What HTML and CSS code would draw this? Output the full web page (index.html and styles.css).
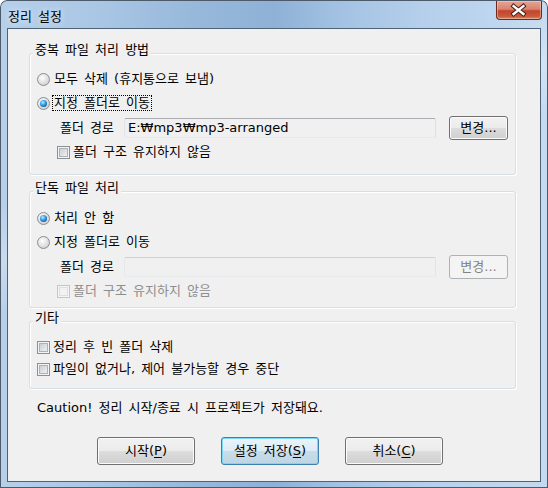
FILE: index.html
```html
<!doctype html>
<html lang="ko">
<head>
    <meta charset="UTF-8">
    <title>정리 설정</title>
    <link rel="stylesheet" href="styles.css">
</head>
<body>
    <div class="window">
        <div class="titlebar">
            <span class="title">정리 설정</span>
            <div class="closeBtn">
                <svg width="46" height="19" viewBox="0 0 46 19">
                    <path d="M18 5 L28 13 M28 5 L18 13" stroke="#4a2018" stroke-width="4.5" stroke-linecap="square"/>
                    <path d="M18 5 L28 13 M28 5 L18 13" stroke="#ffffff" stroke-width="2.5" stroke-linecap="square"/>
                </svg>
            </div>
        </div>

        <div class="client">
            <div class="group groupDup">
                <div class="groupTitle">중복 파일 처리 방법</div>
                <div class="row"><span class="radio"></span>모두 삭제 (휴지통으로 보냄)</div>
                <div class="row"><span class="radio checked"></span><span class="focused">지정 폴더로 이동</span></div>
                <div class="row pathRow">
                    <span class="pathLabel">폴더 경로</span>
                    <div class="textbox">E:₩mp3₩mp3-arranged</div>
                    <div class="btn smallBtn">변경...</div>
                </div>
                <div class="row indent"><span class="checkbox"></span>폴더 구조 유지하지 않음</div>
            </div>

            <div class="group groupSingle">
                <div class="groupTitle">단독 파일 처리</div>
                <div class="row"><span class="radio checked"></span>처리 안 함</div>
                <div class="row"><span class="radio"></span>지정 폴더로 이동</div>
                <div class="row pathRow">
                    <span class="pathLabel">폴더 경로</span>
                    <div class="textbox disabled"></div>
                    <div class="btn smallBtn disabled">변경...</div>
                </div>
                <div class="row indent grayText"><span class="checkbox disabled"></span>폴더 구조 유지하지 않음</div>
            </div>

            <div class="group groupEtc">
                <div class="groupTitle">기타</div>
                <div class="row short"><span class="checkbox"></span>정리 후 빈 폴더 삭제</div>
                <div class="row short"><span class="checkbox"></span>파일이 없거나, 제어 불가능할 경우 중단</div>
            </div>

            <p class="caution">Caution! 정리 시작/종료 시 프로젝트가 저장돼요.</p>

            <div class="buttons">
                <div class="btn">시작(<u>P</u>)</div>
                <div class="btn default">설정 저장(<u>S</u>)</div>
                <div class="btn">취소(<u>C</u>)</div>
            </div>
        </div>
    </div>
</body>
</html>
```

FILE: styles.css
```css
body {
    margin: 0;
    background-color: #ffffff;
    font-family: "DejaVu Sans", "Noto Sans CJK KR", sans-serif;
    font-size: 13px;
    line-height: 14px;
    word-spacing: 2px;
    color: #000000;
}

.window {
    width: 548px;
    height: 488px;
    box-sizing: border-box;
    padding: 0 7px 6px 7px;
    display: flex;
    flex-direction: column;
    border-radius: 7px 7px 0 0;
    box-shadow: inset 0 0 0 1px #4c5a69;
    background:
        linear-gradient(160deg, rgba(255,255,255,0) 30%, rgba(255,255,255,0.25) 38%, rgba(255,255,255,0) 46%),
        linear-gradient(to right, #b7d0ea 0%, #a9c6e5 18%, #97b8da 36%, #8eb1d6 50%, #a3c2e3 62%, #b6d0ec 78%, #c4daf0 100%);
}

/* title bar */

.titlebar {
    height: 28px;
    display: flex;
    align-items: flex-start;
}

.title {
    margin: 10px 0 0 1px;
    text-shadow: 0 0 6px rgba(255,255,255,0.9);
}

.closeBtn {
    margin: 1px -1px 0 auto;
    width: 46px;
    height: 19px;
    box-sizing: border-box;
    border: 1px solid #6b2a20;
    border-top: none;
    border-radius: 0 0 4px 4px;
    background: linear-gradient(#e8a492 0%, #d98470 45%, #c4442a 55%, #c95a3c 85%, #d78a6a 100%);
    box-shadow: inset 0 0 0 1px rgba(255,220,200,0.45);
    display: flex;
}

.closeBtn svg {
    margin-left: -1px;
}

/* client area */

.client {
    flex: 1;
    border: 1px solid #4f6378;
    background-color: #f0f0f0;
    padding: 24px 0 0 21px;
}

.group {
    width: 487px;
    box-sizing: border-box;
    border: 1px solid #d5dfe5;
    border-radius: 3px;
    box-shadow: inset 1px 1px 0 #ffffff, 1px 1px 0 #ffffff;
    padding: 0 7px;
}

.groupTitle {
    display: table;
    margin: -11px 0 0 -4px;
    padding: 0 2px;
    background-color: #f0f0f0;
}

.groupDup {
    padding-bottom: 10px;
}

.groupDup .groupTitle {
    margin-bottom: 10px;
}

.groupSingle {
    margin-top: 16px;
    padding-bottom: 4px;
}

.groupSingle .groupTitle,
.groupEtc .groupTitle {
    margin-bottom: 11px;
}

.groupEtc {
    margin-top: 13px;
    padding-bottom: 8px;
}

.row {
    height: 24px;
    display: flex;
    align-items: center;
}

.row.short {
    height: 22px;
}

.pathRow {
    height: 25px;
    padding-left: 23px;
}

.indent {
    padding-left: 20px;
}

.grayText {
    color: #8e8e8e;
}

.focused {
    outline: 1px dotted #000000;
    outline-offset: 0;
    padding: 0 1px;
    margin-left: -1px;
}

/* radio buttons and check boxes */

.radio {
    width: 13px;
    height: 13px;
    box-sizing: border-box;
    margin-right: 4px;
    border-radius: 50%;
    border: 1px solid #8b8d90;
    background: radial-gradient(circle at 40% 35%, #ffffff 0%, #e4e4e4 45%, #c2c4c6 100%);
    display: flex;
    align-items: center;
    justify-content: center;
}

.radio.checked::after {
    content: "";
    width: 7px;
    height: 7px;
    border-radius: 50%;
    background: radial-gradient(circle at 40% 35%, #b9ecff 0%, #3aa2e6 40%, #0d56a8 80%, #0a3d7c 100%);
}

.checkbox {
    width: 13px;
    height: 13px;
    box-sizing: border-box;
    margin-right: 3px;
    border: 1px solid #8e8f8f;
    background-color: #f4f4f4;
    display: flex;
    align-items: center;
    justify-content: center;
}

.checkbox::after {
    content: "";
    width: 9px;
    height: 9px;
    box-sizing: border-box;
    border: 1px solid #aeb2b6;
    background: linear-gradient(135deg, #cbcfd3, #eef0f2);
}

.checkbox.disabled {
    border-color: #c4c6c8;
}

.checkbox.disabled::after {
    border-color: #dcdee0;
    background: #f2f2f2;
}

/* path rows */

.pathLabel {
    width: 64px;
}

.textbox {
    width: 312px;
    height: 20px;
    box-sizing: border-box;
    border: 1px solid;
    border-color: #abadb3 #dbdfe6 #e3e9ef #e2e3ea;
    border-radius: 2px;
    background-color: #f0f0f0;
    padding: 0 3px;
    line-height: 18px;
    word-spacing: 0;
}

.textbox.disabled {
    border-color: #cfd2d6 #e2e4e8 #e8ebee #e5e7ea;
}

/* buttons */

.btn {
    width: 98px;
    height: 28px;
    box-sizing: border-box;
    border: 1px solid #707070;
    border-radius: 3px;
    background: linear-gradient(#f2f2f2 0%, #ebebeb 50%, #dddddd 50%, #cfcfcf 100%);
    box-shadow: inset 0 0 0 1px #fbfbfb;
    display: flex;
    align-items: center;
    justify-content: center;
}

.btn u {
    text-decoration-thickness: 1px;
    text-underline-offset: 2px;
}

.smallBtn {
    width: 59px;
    height: 24px;
    margin-left: 13px;
}

.btn.disabled {
    border-color: #adb2b5;
    background: #f4f4f4;
    box-shadow: none;
    color: #838383;
}

.btn.default {
    border-color: #3c7fb1;
    background: linear-gradient(#eaf4fb 0%, #dcebf5 50%, #c8dde9 50%, #bdd5e4 100%);
    box-shadow: inset 0 0 0 1px #7ed6f7;
}

.caution {
    margin: 12px 0 0 8px;
}

.buttons {
    margin: 22px 0 0 68px;
    display: flex;
    gap: 26px;
}
```
